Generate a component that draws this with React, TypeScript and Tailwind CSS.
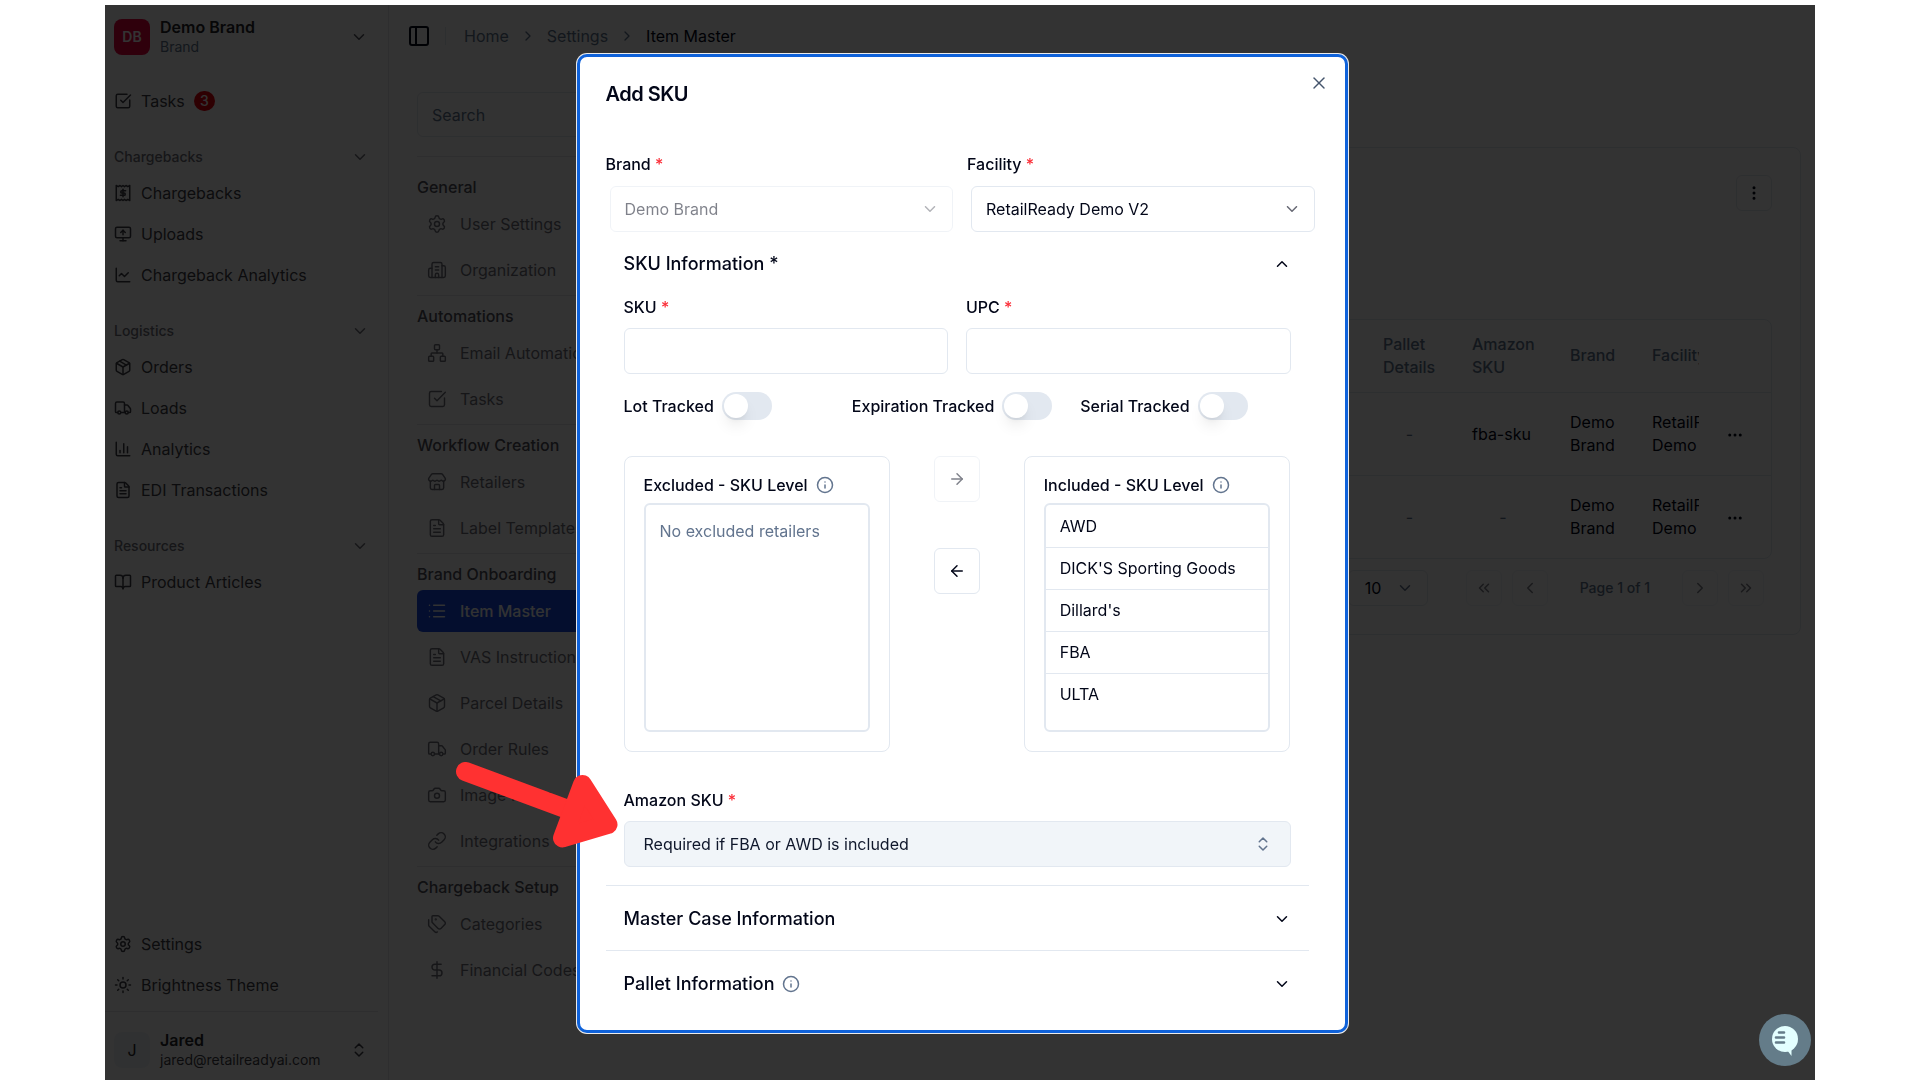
import { useState } from "react";
import type { ReactNode } from "react";
import {
  ArrowLeft,
  ArrowRight,
  BookOpen,
  Building2,
  Camera,
  ChartColumn,
  ChartLine,
  ChevronDown,
  ChevronLeft,
  ChevronRight,
  ChevronsLeft,
  ChevronsRight,
  ChevronsUpDown,
  ChevronUp,
  DollarSign,
  Ellipsis,
  EllipsisVertical,
  FileText,
  Info,
  Link,
  List,
  MonitorUp,
  Network,
  Package,
  PanelLeft,
  Settings,
  SquareCheckBig,
  Store,
  Sun,
  Tags,
  Truck,
  X,
} from "lucide-react";
import type { LucideIcon } from "lucide-react";

type NavItem = { icon: any; label: string; badge?: string; active?: boolean };

// Receipt with a small dollar sign and zigzag edges
function ReceiptDollar({ className }: { className?: string }) {
  return (
    <svg
      className={className}
      viewBox="0 0 24 24"
      fill="none"
      stroke="currentColor"
      strokeWidth="2"
      strokeLinecap="round"
      strokeLinejoin="round"
    >
      <path d="M3 2v20l2.500-1.500 2.500 1.500 2-1.500 2 1.500 2-1.500 2 1.500 2.500-1.500 2.500 1.500V2l-2.500 1.500L16 2l-2 1.500L12 2l-2 1.500L8 2 5.500 3.500Z" />
      <path d="M15.500 9h-5a1.500 1.500 0 0 0 0 3h3a1.500 1.500 0 0 1 0 3h-5" />
      <path d="M12 17V7" />
    </svg>
  );
}

const sidebarGroups: { title: string; items: NavItem[] }[] = [
  {
    title: "Chargebacks",
    items: [
      { icon: ReceiptDollar, label: "Chargebacks" },
      { icon: MonitorUp, label: "Uploads" },
      { icon: ChartLine, label: "Chargeback Analytics" },
    ],
  },
  {
    title: "Logistics",
    items: [
      { icon: Package, label: "Orders" },
      { icon: Truck, label: "Loads" },
      { icon: ChartColumn, label: "Analytics" },
      { icon: FileText, label: "EDI Transactions" },
    ],
  },
  {
    title: "Resources",
    items: [{ icon: BookOpen, label: "Product Articles" }],
  },
];

const settingsGroups: { title: string; items: NavItem[] }[] = [
  {
    title: "General",
    items: [
      { icon: Settings, label: "User Settings" },
      { icon: Building2, label: "Organization" },
    ],
  },
  {
    title: "Automations",
    items: [
      { icon: Network, label: "Email Automations" },
      { icon: SquareCheckBig, label: "Tasks" },
    ],
  },
  {
    title: "Workflow Creation",
    items: [
      { icon: Store, label: "Retailers" },
      { icon: FileText, label: "Label Templates" },
    ],
  },
  {
    title: "Brand Onboarding",
    items: [
      { icon: List, label: "Item Master", active: true },
      { icon: FileText, label: "VAS Instructions" },
      { icon: Package, label: "Parcel Details" },
      { icon: Truck, label: "Order Rules" },
      { icon: Camera, label: "Image Rules" },
      { icon: Link, label: "Integrations" },
    ],
  },
  {
    title: "Chargeback Setup",
    items: [
      { icon: Tags, label: "Categories" },
      { icon: DollarSign, label: "Financial Codes" },
    ],
  },
];

const rows = [
  { pallet: "-", amazon: "fba-sku" },
  { pallet: "-", amazon: "-" },
];

const retailers = ["AWD", "DICK'S Sporting Goods", "Dillard's", "FBA", "ULTA"];

function SidebarLink({ item }: { item: NavItem }) {
  const Icon = item.icon;
  return (
    <a href="#" className="flex h-[41px] items-center gap-[9px] text-zinc-700">
      <Icon className="size-[18px] shrink-0" />
      <span>{item.label}</span>
      {item.badge && (
        <span className="flex h-5 min-w-[21px] items-center justify-center rounded-full bg-red-600 px-1.5 text-sm font-medium text-white">
          {item.badge}
        </span>
      )}
    </a>
  );
}

function Sidebar() {
  return (
    <aside className="flex w-[284px] shrink-0 flex-col border-r border-gray-200">
      <button className="mt-2 flex h-12 items-center px-[9px] pr-5 text-left">
        <span className="flex size-9 items-center justify-center rounded-lg bg-rose-600 text-sm font-semibold text-white">
          DB
        </span>
        <span className="ml-2.5 flex flex-1 flex-col">
          <span className="text-base leading-5 font-semibold text-zinc-800">Demo Brand</span>
          <span className="text-sm leading-5 text-slate-500">Brand</span>
        </span>
        <ChevronDown className="size-[18px] text-zinc-600" />
      </button>

      <nav className="mt-[19px] px-[9px]">
        <SidebarLink item={{ icon: SquareCheckBig, label: "Tasks", badge: "3" }} />
        {sidebarGroups.map((group) => (
          <div key={group.title} className="mt-[21px]">
            <button className="flex h-[30px] w-full items-center justify-between pr-[10px] text-sm font-medium text-zinc-500">
              {group.title}
              <ChevronDown className="size-[18px]" />
            </button>
            {group.items.map((item) => (
              <SidebarLink key={item.label} item={item} />
            ))}
          </div>
        ))}
      </nav>

      <div className="mt-auto px-[9px]">
        <SidebarLink item={{ icon: Settings, label: "Settings" }} />
        <SidebarLink item={{ icon: Sun, label: "Brightness Theme" }} />
      </div>
      <div className="mt-1.5 mr-[10px] border-t border-gray-200" />
      <button className="mt-3.5 mb-1.5 flex h-12 items-center px-[9px] pr-5 text-left">
        <span className="flex size-9 items-center justify-center rounded-lg bg-slate-100 text-base text-zinc-800">
          J
        </span>
        <span className="ml-2.5 flex flex-1 flex-col">
          <span className="text-base leading-5 font-semibold text-zinc-800">Jared</span>
          <span className="text-sm leading-5 text-zinc-700">jared@retailreadyai.com</span>
        </span>
        <ChevronsUpDown className="size-[18px] text-zinc-700" />
      </button>
    </aside>
  );
}

function SettingsNav() {
  return (
    <nav className="w-[280px] shrink-0">
      <input
        type="text"
        placeholder="Search"
        aria-label="Search settings"
        className="h-[45px] w-full rounded-md border border-slate-200 px-3.5 text-base placeholder:text-slate-500"
      />
      <div className="mt-[19px]">
        {settingsGroups.map((group) => (
          <div key={group.title} className="border-t border-gray-200 pt-2 pb-1 first:pt-[18px]">
            <h3 className="mb-1 leading-6 font-medium text-zinc-600">{group.title}</h3>
            <div className="space-y-1">
              {group.items.map((item) => {
                const Icon = item.icon;
                return (
                  <a
                    key={item.label}
                    href="#"
                    className={
                      item.active
                        ? "flex h-[42px] items-center gap-[13px] rounded-md bg-blue-700 px-2.5 font-medium text-slate-50"
                        : "flex h-[42px] items-center gap-[13px] rounded-md px-2.5 text-zinc-500"
                    }
                  >
                    <Icon className="size-5" strokeWidth={1.75} />
                    {item.label}
                  </a>
                );
              })}
            </div>
          </div>
        ))}
      </div>
    </nav>
  );
}

function PageButton({ icon: Icon, label }: { icon: LucideIcon; label: string }) {
  return (
    <button
      aria-label={label}
      className="flex size-9 items-center justify-center rounded-md border border-slate-200 text-slate-950 opacity-50"
    >
      <Icon className="size-[18px]" />
    </button>
  );
}

function ItemTable() {
  return (
    <section className="mt-[55px] min-w-0 flex-1 self-start rounded-lg border border-slate-200 px-7 pt-[27px] pb-7">
      <div className="flex justify-end">
        <button
          aria-label="More actions"
          className="flex size-9 items-center justify-center rounded-md border border-slate-200 text-slate-950"
        >
          <EllipsisVertical className="size-[18px]" />
        </button>
      </div>

      <div className="mt-[108px] overflow-hidden rounded-lg border border-slate-200">
        <table className="w-full table-fixed border-collapse text-left">
          <colgroup>
            <col />
            <col className="w-[89px]" />
            <col className="w-[98px]" />
            <col className="w-[82px]" />
            <col className="w-[65px]" />
            <col className="w-[72px]" />
          </colgroup>
          <thead>
            <tr className="h-[72px] text-slate-500">
              <td />
              <th className="px-[18px] leading-[23px] font-medium">Pallet Details</th>
              <th className="px-[18px] leading-[23px] font-medium">Amazon SKU</th>
              <th className="px-[18px] leading-[23px] font-medium">Brand</th>
              <th className="overflow-hidden pl-[18px] leading-[23px] font-medium">Facility</th>
              <td />
            </tr>
          </thead>
          <tbody>
            {rows.map((row, index) => (
              <tr key={index} className="h-[83px] border-t border-slate-200 text-slate-950">
                <td />
                <td className="px-[18px] text-center text-slate-500">{row.pallet}</td>
                <td className={row.amazon === "-" ? "px-[18px] text-center text-slate-500" : "pl-[18px]"}>
                  {row.amazon}
                </td>
                <td className="pl-[18px] leading-[23px]">
                  Demo
                  <br />
                  Brand
                </td>
                <td className="overflow-hidden pl-[18px] leading-[23px]">
                  RetailReady
                  <br />
                  Demo
                </td>
                <td className="text-center">
                  <button aria-label="Row actions" className="align-middle">
                    <Ellipsis className="size-[18px]" />
                  </button>
                </td>
              </tr>
            ))}
          </tbody>
        </table>
      </div>

      <div className="mt-[11px] flex items-center justify-end gap-2.5 pr-2">
        <div className="relative mr-7">
          <select
            aria-label="Rows per page"
            className="h-9 w-20 appearance-none rounded-md border border-slate-200 px-4 text-base text-slate-950"
          >
            <option>10</option>
          </select>
          <ChevronDown className="pointer-events-none absolute top-[9px] right-3.5 size-[18px] text-slate-500" />
        </div>
        <PageButton icon={ChevronsLeft} label="First page" />
        <PageButton icon={ChevronLeft} label="Previous page" />
        <span className="px-[22px] text-sm font-medium text-slate-500">Page 1 of 1</span>
        <PageButton icon={ChevronRight} label="Next page" />
        <PageButton icon={ChevronsRight} label="Last page" />
      </div>
    </section>
  );
}

function FieldLabel({ htmlFor, children }: { htmlFor: string; children: ReactNode }) {
  return (
    <label htmlFor={htmlFor} className="block leading-6 font-medium">
      {children} <span className="text-red-500">*</span>
    </label>
  );
}

function SwitchField({ id, label }: { id: string; label: string }) {
  const [checked, setChecked] = useState(false);
  return (
    <div className="flex items-center gap-2">
      <label htmlFor={id} className="font-medium whitespace-nowrap">
        {label}
      </label>
      <input
        id={id}
        type="checkbox"
        role="switch"
        checked={checked}
        onChange={() => setChecked(!checked)}
        className="flex h-7 w-[50px] shrink-0 appearance-none items-center rounded-full bg-slate-200 px-0.5 before:size-6 before:rounded-full before:bg-white before:shadow-lg checked:justify-end checked:bg-blue-600"
      />
    </div>
  );
}

function SkuLevelBox({ title, children }: { title: string; children: ReactNode }) {
  return (
    <div className="col-span-2 rounded-lg border border-slate-200 p-[19px] pt-4">
      <div className="mb-1.5 flex h-6 items-center gap-2">
        <h4 className="font-medium whitespace-nowrap">{title}</h4>
        <Info className="size-[18px] text-slate-500" />
      </div>
      <div className="h-[229px] rounded-md border-2 border-slate-200">{children}</div>
    </div>
  );
}

function AddSkuDialog() {
  return (
    <div
      role="dialog"
      aria-label="Add SKU"
      className="relative w-[771px] rounded-[10px] border-[3px] border-[#0f62da] bg-white pr-9 pb-[15px] pl-[26px] text-slate-950 ring-1 ring-white/90"
    >
      <button aria-label="Close" className="absolute top-4 right-4 text-slate-600">
        <X className="size-5" strokeWidth={1.75} />
      </button>
      <h2 className="pt-[23px] text-xl leading-7 font-semibold tracking-tight">Add SKU</h2>

      <div className="mt-11 grid grid-cols-2 gap-x-5">
        <div>
          <FieldLabel htmlFor="brand">Brand</FieldLabel>
          <div className="relative mt-2.5 -mr-1.5 ml-1 opacity-50">
            <select
              id="brand"
              disabled
              className="h-[46px] w-full appearance-none rounded-md border border-slate-200 px-3.5 text-base"
            >
              <option>Demo Brand</option>
            </select>
            <ChevronDown className="pointer-events-none absolute top-3.5 right-[14px] size-[18px] opacity-60" />
          </div>
        </div>
        <div>
          <FieldLabel htmlFor="facility">Facility</FieldLabel>
          <div className="relative mt-2.5 -mr-1.5 ml-1">
            <select
              id="facility"
              className="h-[46px] w-full appearance-none rounded-md border border-slate-200 px-3.5 text-base"
            >
              <option>RetailReady Demo V2</option>
            </select>
            <ChevronDown className="pointer-events-none absolute top-3.5 right-[14px] size-[18px] opacity-60" />
          </div>
        </div>
      </div>

      <section className="px-[18px]">
        <button className="mt-[18px] flex h-7 w-full items-center justify-between text-lg font-medium">
          SKU Information *
          <ChevronUp className="size-[18px]" />
        </button>

        <div className="mt-[17px] grid grid-cols-2 gap-x-[18px]">
          <div>
            <FieldLabel htmlFor="sku">SKU</FieldLabel>
            <input id="sku" type="text" className="mt-[9px] h-[46px] w-full rounded-md border border-slate-200 px-3.5" />
          </div>
          <div>
            <FieldLabel htmlFor="upc">UPC</FieldLabel>
            <input id="upc" type="text" className="mt-[9px] h-[46px] w-full rounded-md border border-slate-200 px-3.5" />
          </div>
        </div>

        <div className="mt-[18px] grid grid-cols-3 gap-x-[18px]">
          <SwitchField id="lot" label="Lot Tracked" />
          <SwitchField id="expiration" label="Expiration Tracked" />
          <SwitchField id="serial" label="Serial Tracked" />
        </div>

        <div className="mt-9 grid grid-cols-5">
          <SkuLevelBox title="Excluded - SKU Level">
            <p className="px-3.5 py-3.5 leading-6 text-slate-500">No excluded retailers</p>
          </SkuLevelBox>
          <div className="flex flex-col items-center gap-[46px]">
            <button
              aria-label="Include retailer"
              disabled
              className="flex size-[46px] items-center justify-center rounded-md border border-slate-200 opacity-50"
            >
              <ArrowRight className="size-[18px]" />
            </button>
            <button
              aria-label="Exclude retailer"
              className="flex size-[46px] items-center justify-center rounded-md border border-slate-200"
            >
              <ArrowLeft className="size-[18px]" />
            </button>
          </div>
          <SkuLevelBox title="Included - SKU Level">
            <ul className="divide-y divide-slate-200 pt-px">
              {retailers.map((name) => (
                <li key={name} className="px-3.5 py-[9px] leading-[23px]">
                  {name}
                </li>
              ))}
            </ul>
          </SkuLevelBox>
        </div>

        <div className="mt-9 mb-[18px]">
          <FieldLabel htmlFor="amazon-sku">Amazon SKU</FieldLabel>
          <div className="relative mt-[9px]">
            <select
              id="amazon-sku"
              className="h-[46px] w-full appearance-none rounded-md border border-slate-200 bg-slate-100 px-[19px] text-base text-slate-900"
            >
              <option>Required if FBA or AWD is included</option>
            </select>
            <ChevronsUpDown className="pointer-events-none absolute top-3.5 right-[19px] size-[18px] text-slate-500" />
          </div>
        </div>
      </section>

      <button className="flex h-[65px] w-full items-center justify-between border-t border-slate-200 px-[18px] pt-0.5 text-lg font-medium">
        Master Case Information
        <ChevronDown className="size-[18px]" />
      </button>
      <button className="flex h-[65px] w-full items-center justify-between border-t border-slate-200 px-[18px] pt-0.5 text-lg font-medium">
        <span className="flex items-center gap-2">
          Pallet Information
          <Info className="size-[18px] text-slate-500" />
        </span>
        <ChevronDown className="size-[18px]" />
      </button>
    </div>
  );
}

export default function App() {
  return (
    <div className="flex min-h-screen bg-white px-[105px] pt-[5px] font-['Inter',sans-serif] text-base">
      <div className="relative flex min-w-0 flex-1">
        <Sidebar />
        <main className="min-w-0 flex-1 px-3.5">
          <header className="flex h-[62px] items-center px-1 text-slate-500">
            <button aria-label="Toggle sidebar" className="text-slate-950">
              <PanelLeft className="size-6" />
            </button>
            <div className="ml-[14px] h-[18px] border-l border-slate-200" />
            <nav aria-label="Breadcrumb" className="ml-[18px] flex items-center gap-[11px]">
              <a href="#">Home</a>
              <ChevronRight className="size-4" />
              <a href="#">Settings</a>
              <ChevronRight className="size-4" />
              <span className="text-slate-950">Item Master</span>
            </nav>
          </header>
          <div className="flex gap-8 pt-[25px] pl-3.5">
            <SettingsNav />
            <ItemTable />
          </div>
        </main>

        {/* Dimmed backdrop */}
        <div className="absolute inset-0 bg-black/80" />

        <button
          aria-label="Open chat"
          className="absolute right-1 bottom-3.5 flex size-[52px] items-center justify-center rounded-full bg-[#647c89]"
        >
          <svg viewBox="0 0 30 34" className="w-[30px]">
            <circle cx="15" cy="16" r="13" fill="#e3ffff" />
            <path d="M17 27 L21.500 33 V25 Z" fill="#e3ffff" />
            <path d="M9 9.500H14M6 14.500H14M6 19.500H14" stroke="#647c89" strokeWidth="2.6" strokeLinecap="round" />
          </svg>
        </button>
      </div>

      <div className="fixed inset-0 flex items-start justify-center overflow-y-auto pt-[54px] pl-1">
        <AddSkuDialog />
      </div>

      {/* Annotation arrow pointing at the Amazon SKU field */}
      <svg
        viewBox="455 762 164 87"
        className="pointer-events-none absolute top-[762px] left-[455px] h-[87px] w-[164px]"
        fill="#ff3131"
        stroke="#ff3131"
        strokeWidth="19"
        strokeLinecap="round"
        strokeLinejoin="round"
      >
        <path d="M465.500 771.500 L572 811" />
        <path d="M582.500 784.500 L608 824.500 L562.500 838 Z" />
      </svg>
    </div>
  );
}
